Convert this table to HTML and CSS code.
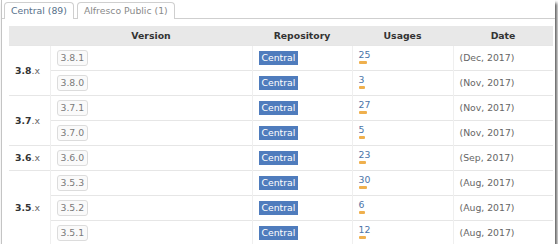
FILE: index.html
```html
<!DOCTYPE html>
<html>
<head>
<meta charset="utf-8">
<link rel="stylesheet" href="styles.css">
</head>
<body>
<div class="frame">
  <div class="tabs">
    <div class="tab active">Central (89)</div>
    <div class="tab">Alfresco Public (1)</div>
  </div>
  <div class="content">
    <table class="grid">
      <colgroup>
        <col class="c-group"><col class="c-ver"><col class="c-repo"><col class="c-use"><col class="c-date">
      </colgroup>
      <thead>
        <tr><th></th><th>Version</th><th>Repository</th><th>Usages</th><th>Date</th></tr>
      </thead>
      <tbody>
        <tr>
          <td class="grp" rowspan="2"><b>3.8</b>.x</td>
          <td><span class="ver">3.8.1</span></td>
          <td><span class="repo">Central</span></td>
          <td class="use"><a class="num">25</a><span class="bar" style="width:8px"></span></td>
          <td class="date">(Dec, 2017)</td>
        </tr>
        <tr>
          <td><span class="ver">3.8.0</span></td>
          <td><span class="repo">Central</span></td>
          <td class="use"><a class="num">3</a><span class="bar" style="width:6px"></span></td>
          <td class="date">(Nov, 2017)</td>
        </tr>
        <tr>
          <td class="grp" rowspan="2"><b>3.7</b>.x</td>
          <td><span class="ver">3.7.1</span></td>
          <td><span class="repo">Central</span></td>
          <td class="use"><a class="num">27</a><span class="bar" style="width:8px"></span></td>
          <td class="date">(Nov, 2017)</td>
        </tr>
        <tr>
          <td><span class="ver">3.7.0</span></td>
          <td><span class="repo">Central</span></td>
          <td class="use"><a class="num">5</a><span class="bar" style="width:6px"></span></td>
          <td class="date">(Nov, 2017)</td>
        </tr>
        <tr>
          <td class="grp"><b>3.6</b>.x</td>
          <td><span class="ver">3.6.0</span></td>
          <td><span class="repo">Central</span></td>
          <td class="use"><a class="num">23</a><span class="bar" style="width:7px"></span></td>
          <td class="date">(Sep, 2017)</td>
        </tr>
        <tr>
          <td class="grp" rowspan="4"><b>3.5</b>.x</td>
          <td><span class="ver">3.5.3</span></td>
          <td><span class="repo">Central</span></td>
          <td class="use"><a class="num">30</a><span class="bar" style="width:8px"></span></td>
          <td class="date">(Aug, 2017)</td>
        </tr>
        <tr>
          <td><span class="ver">3.5.2</span></td>
          <td><span class="repo">Central</span></td>
          <td class="use"><a class="num">6</a><span class="bar" style="width:6px"></span></td>
          <td class="date">(Aug, 2017)</td>
        </tr>
        <tr>
          <td><span class="ver">3.5.1</span></td>
          <td><span class="repo">Central</span></td>
          <td class="use"><a class="num">12</a><span class="bar" style="width:7px"></span></td>
          <td class="date">(Aug, 2017)</td>
        </tr>
      </tbody>
    </table>
  </div>
</div>
</body>
</html>
```
FILE: styles.css
```css
html, body {
  margin: 0;
  padding: 0;
  background: #fff;
}
body {
  font-family: "DejaVu Sans", Verdana, sans-serif;
  font-size: 9.3px;
  color: #333;
}
.frame {
  box-sizing: border-box;
  width: 554px;
  height: 244px;
  margin-left: 1px;
  padding-top: 2px;
  border-left: 1px solid #c4c4c4;
  background: #fff;
  overflow: hidden;
  box-shadow: 2px 3px 3px rgba(0, 0, 0, 0.65);
}
.tabs {
  display: flex;
  gap: 3px;
  padding-left: 2px;
  border-bottom: 1px solid #cfcfcf;
  height: 16px;
}
.tab {
  box-sizing: border-box;
  height: 17px;
  padding: 2px 6px 0 6px;
  line-height: 12px;
  border: 1px solid #cfcfcf;
  border-bottom: none;
  border-radius: 4px 4px 0 0;
  color: #8a8a8a;
  background: #fff;
}
.tab.active {
  color: #56708a;
  position: relative;
  z-index: 1;
}
.content {
  padding: 7px 0 0 7px;
}
.grid {
  border-collapse: collapse;
  table-layout: fixed;
  width: 544px;
}
.c-group { width: 41px; }
.c-ver { width: 202px; }
.c-repo { width: 100px; }
.c-use { width: 101px; }
.c-date { width: 100px; }
.grid th {
  background: #e8e8e8;
  height: 19px;
  padding: 0;
  font-weight: bold;
  text-align: center;
  line-height: 12px;
  color: #333;
}
.grid td {
  height: 24px;
  padding: 0 6px;
  border-top: 1px solid #e6e6e6;
  border-left: 1px solid #efefef;
  vertical-align: middle;
  line-height: 12px;
  white-space: nowrap;
}
.grid td.grp {
  border-left: none;
  color: #666;
}
.grp b {
  color: #333;
}
.ver {
  display: inline-block;
  padding: 1px 3px;
  line-height: 12px;
  border: 1px solid #dcdcdc;
  border-radius: 3px;
  background: #fafafa;
  color: #7a7a7a;
}
.repo {
  display: inline-block;
  padding: 1px 3px;
  line-height: 12px;
  background: #4f7cbd;
  color: #fff;
}
.grid td.use {
  vertical-align: top;
  padding-top: 3px;
  height: 21px;
}
.num {
  display: block;
  color: #4a74a8;
  line-height: 11px;
}
.bar {
  display: block;
  height: 3px;
  margin-top: 1px;
  background: #efb04e;
  border-radius: 1px;
}
.date {
  color: #666;
}
```
